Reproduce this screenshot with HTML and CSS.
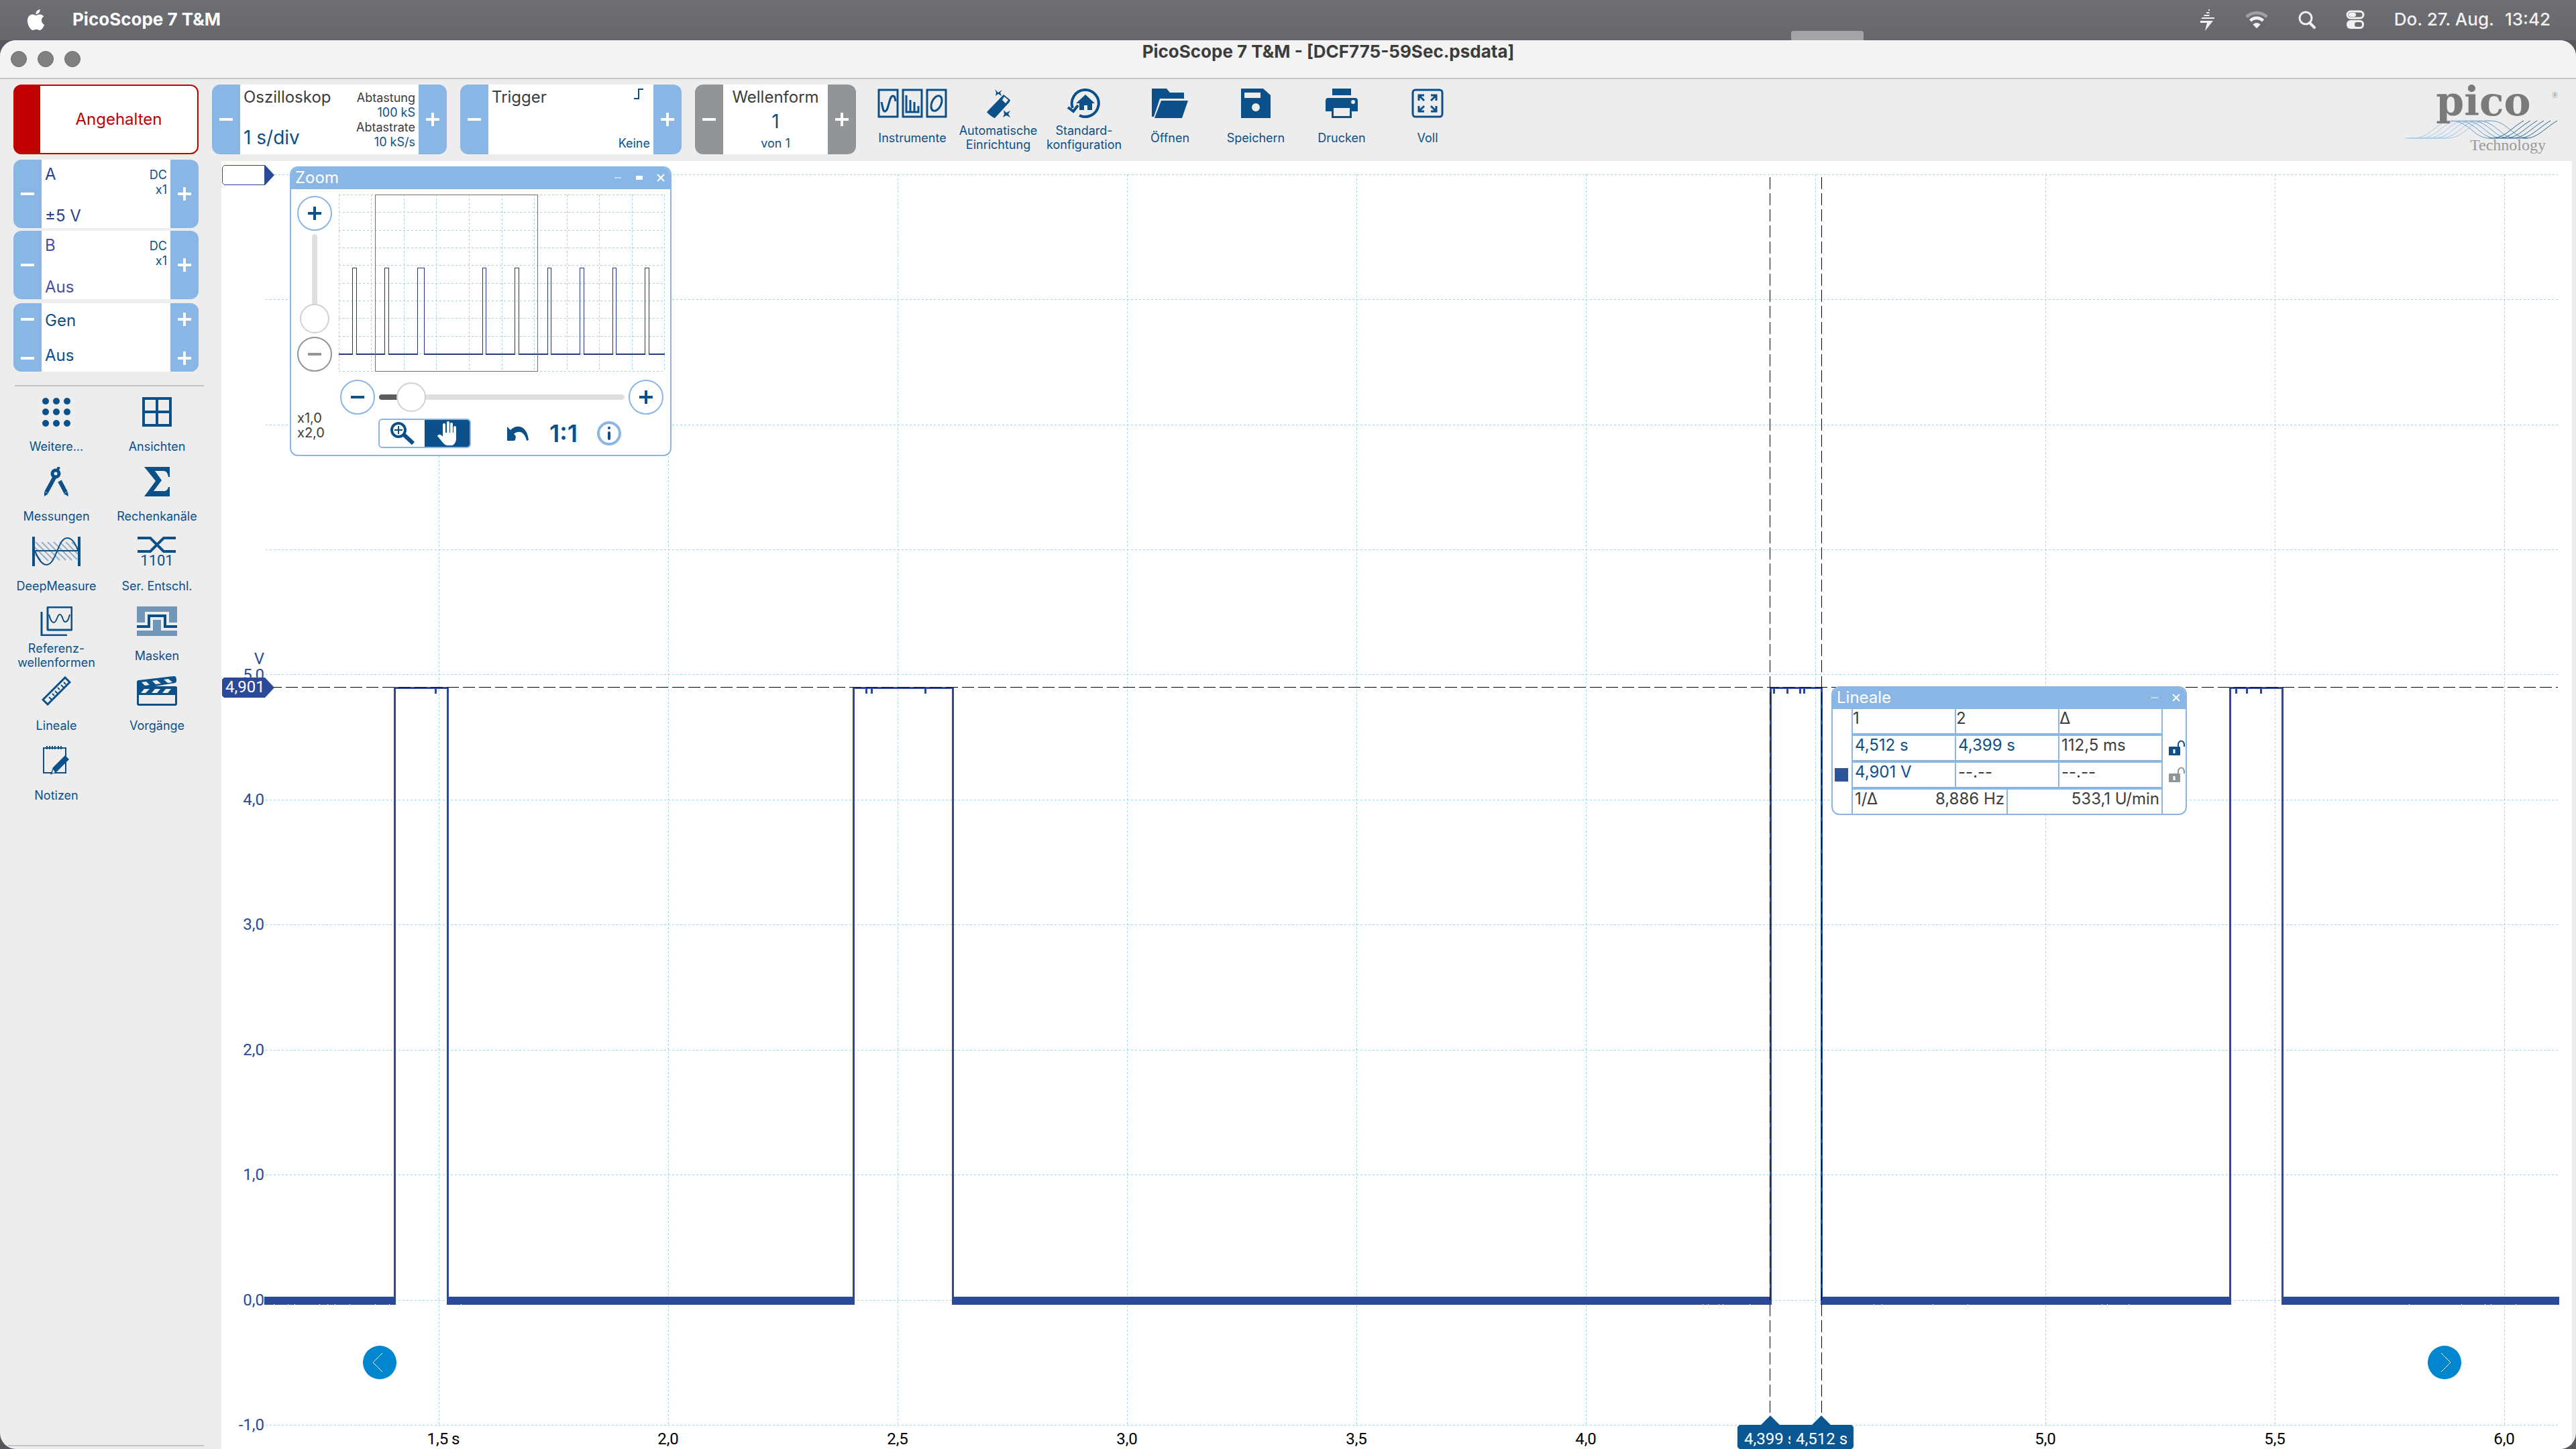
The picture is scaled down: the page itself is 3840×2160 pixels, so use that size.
FILE: index.html
```html
<!DOCTYPE html>
<html lang="de">
  <head>
    <title>PicoScope 7 T&amp;M</title>
    <meta charset="UTF-8">
    <meta name="viewport" content="width=device-width, initial-scale=1.0">
    <link rel="stylesheet" href="styles.css">
  </head>
  <body>
    <header class="menubar">
      <svg class="apple" viewBox="0 0 24 24"><path d="M12.152 6.896c-.948 0-2.415-1.078-3.96-1.04-2.04.027-3.91 1.183-4.961 3.014-2.117 3.675-.546 9.103 1.519 12.09 1.013 1.454 2.208 3.09 3.792 3.039 1.52-.065 2.09-.987 3.935-.987 1.831 0 2.35.987 3.96.948 1.637-.026 2.676-1.48 3.676-2.948 1.156-1.688 1.636-3.325 1.662-3.415-.039-.013-3.182-1.221-3.22-4.857-.026-3.04 2.48-4.494 2.597-4.559-1.429-2.09-3.623-2.324-4.39-2.376-2-.156-3.675 1.09-4.61 1.09zM15.53 3.83c.843-1.012 1.4-2.427 1.245-3.83-1.207.052-2.662.805-3.532 1.818-.78.896-1.454 2.338-1.273 3.714 1.338.104 2.715-.688 3.559-1.701"/></svg>
      <span class="app-name">PicoScope 7 T&amp;M</span>
      <span class="notch"></span>
      <div class="status">
        <svg width="24" height="34" viewBox="0 0 24 34" fill="#f1f1f1"><path d="M13 2h2v2h-2zM10 6h5l-1 2h-4zM7 10h8l-1 2H6zM4 14h18v2H2zM1 19h19L8 34 11 22H1z"/></svg>
        <svg width="34" height="30" viewBox="0 0 36 30" fill="none"><path d="M2 11a23 23 0 0 1 32 0" stroke="#a0a0a4" stroke-width="5"/><path d="M8 17a14 14 0 0 1 20 0" stroke="#f1f1f1" stroke-width="5"/><path d="M18 29l-6-6a8 8 0 0 1 12 0z" fill="#f1f1f1"/></svg>
        <svg width="28" height="28" viewBox="0 0 28 28" fill="none" stroke="#f1f1f1" stroke-width="3"><circle cx="12" cy="12" r="9"/><path d="M18 19l7 7" stroke-width="4" stroke-linecap="round"/></svg>
        <svg width="28" height="28" viewBox="0 0 28 28"><rect x="2" y="2" width="24" height="10" rx="5" fill="none" stroke="#f1f1f1" stroke-width="3"/><rect x="4" y="4" width="11" height="6" rx="3" fill="#f1f1f1"/><rect x="1" y="15" width="26" height="13" rx="6" fill="#f1f1f1"/><rect x="13" y="18" width="11" height="7" rx="3" fill="#6b6c71"/></svg>
        <time>Do. 27. Aug.<span class="clock">13:42</span></time>
      </div>
    </header>

    <div class="window">
      <div class="titlebar">
        <div class="lights"><i></i><i></i><i></i></div>
        <h1>PicoScope 7 T&amp;M - [DCF775-59Sec.psdata]</h1>
      </div>

      <div class="content">
        <aside class="sidebar">
          <div class="channels">
            <button class="stopped">Angehalten</button>
            <div class="box channel">
              <button class="side minus" aria-label="A kleiner"></button>
              <div class="face navy">
                <div class="col"><span>A</span><span>±5 V</span></div>
                <div class="small blue">DC<br>x1</div>
              </div>
              <button class="side plus" aria-label="A größer"></button>
            </div>
            <div class="box channel">
              <button class="side minus" aria-label="B kleiner"></button>
              <div class="face purple">
                <div class="col"><span>B</span><span>Aus</span></div>
                <div class="small blue">DC<br>x1</div>
              </div>
              <button class="side plus" aria-label="B größer"></button>
            </div>
            <div class="box channel gen">
              <div class="stack"><button class="side minus" aria-label="Gen kleiner"></button><button class="side minus" aria-label="Aus kleiner"></button></div>
              <div class="face blue">
                <div class="col"><span>Gen</span><span>Aus</span></div>
              </div>
              <div class="stack"><button class="side plus" aria-label="Gen größer"></button><button class="side plus" aria-label="Aus größer"></button></div>
            </div>
          </div>
          <hr>
          <nav class="apps">
            <button class="tool">
              <svg width="44" height="44" viewBox="0 0 44 44" fill="#0b5089"><circle cx="6" cy="6" r="5"/><circle cx="22" cy="6" r="5"/><circle cx="38" cy="6" r="5"/><circle cx="6" cy="22" r="5"/><circle cx="22" cy="22" r="5"/><circle cx="38" cy="22" r="5"/><circle cx="6" cy="39" r="5"/><circle cx="22" cy="39" r="5"/><circle cx="38" cy="39" r="5"/></svg>
              <span>Weitere...</span>
            </button>
            <button class="tool">
              <svg width="44" height="44" viewBox="0 0 44 44" fill="none" stroke="#0b5089" stroke-width="4"><path d="M2 2h40v40H2zM22 2v40M2 22h40"/></svg>
              <span>Ansichten</span>
            </button>
            <button class="tool">
              <svg width="44" height="44" viewBox="0 0 44 44" fill="none" stroke="#0b5089"><circle cx="21" cy="10" r="5" stroke-width="5"/><path d="M24 4l2-4" stroke-width="4"/><path d="M19 16L7 38" stroke-width="6"/><path d="M27 21l9 17" stroke-width="6"/><path d="M4 37l6 3-6 4zM39 37l-6 3 7 4z" fill="#0b5089" stroke="none"/></svg>
              <span>Messungen</span>
            </button>
            <button class="tool">
              <svg width="44" height="44" viewBox="0 0 44 44"><path fill="#0b5089" d="M3 0h38v15h-2c-1-6-3-9-8-9H19l10 14-12 16h15c4 0 6-2 7-6h2v14H3l17-23z"/></svg>
              <span>Rechenkanäle</span>
            </button>
            <button class="tool">
              <svg width="72" height="44" viewBox="0 0 72 44" fill="none" stroke="#0b5089"><path d="M4 16l20 20M5 8l27 27M14 8l27 27M23 8l27 27M32 8l27 27M41 8l26 26M50 8l18 18M59 8l9 9M4 26l9 9" stroke="#94b0c9" stroke-width="2"/><path d="M4 21h64" stroke-width="2"/><path d="M4 21c5 12 10 21 17 21 15 0 17-40 31-40 8 0 12 8 16 18" stroke-width="2"/><path d="M2 0v44M70 0v44" stroke-width="4"/></svg>
              <span>DeepMeasure</span>
            </button>
            <button class="tool">
              <svg width="60" height="44" viewBox="0 0 60 44"><path d="M1 2h19l20 20h18M1 22h19L40 2h18" fill="none" stroke="#0b5089" stroke-width="4"/><text x="30" y="43" text-anchor="middle" class="bits">1101</text></svg>
              <span>Ser. Entschl.</span>
            </button>
            <button class="tool">
              <svg width="48" height="44" viewBox="0 0 48 44" fill="none" stroke="#0b5089"><rect x="11" y="1" width="36" height="34" rx="1" stroke-width="3"/><path d="M2 8v35h38" stroke-width="3"/><path d="M13 12c2 8 4 12 7 12 5 0 5-12 9-12 5 0 4 11 8 11 4 0 5-4 7-11" stroke-width="2"/></svg>
              <span>Referenz-<br>wellenformen</span>
            </button>
            <button class="tool">
              <svg width="60" height="44" viewBox="0 0 60 44"><path d="M0 0h60v24H48V8H12v16H0zM0 36h24V20h12v16h24v8H0z" fill="#7196b7"/><path d="M0 30h18V14h24v16h18" fill="none" stroke="#0b5089" stroke-width="4"/></svg>
              <span>Masken</span>
            </button>
            <button class="tool">
              <svg width="44" height="44" viewBox="0 0 44 44" fill="none" stroke="#0b5089"><path d="M2 35L35 2l7 7L9 42z" stroke-width="3"/><path d="M9 29l4 4M14 24l3 3M18 20l4 4M22 15l3 3M27 11l4 4M31 7l3 3" stroke-width="2" transform="translate(2 2)"/></svg>
              <span>Lineale</span>
            </button>
            <button class="tool">
              <svg width="60" height="44" viewBox="0 0 60 44"><path fill="#0b5089" d="M3 6L55 0c3 0 4 2 4 5s0 4-2 5l-30 5h31c1 0 2 1 2 2v24c0 2-1 3-3 3H3c-2 0-3-1-3-3V9c0-2 1-3 3-3z"/><path fill="#ededed" d="M3 28h54v13H3zM7 9l7-1 5 5-7 1zM23 7l7-1 6 5-8 1zM40 5l7-1 6 5-7 1zM11 19h8l-6 6H6zM27 19h8l-5 6h-8zM43 19h8l-5 6h-8z"/></svg>
              <span>Vorgänge</span>
            </button>
            <button class="tool">
              <svg width="44" height="44" viewBox="0 0 44 44" fill="none" stroke="#0b5089"><path d="M3 3h33v37H3z" stroke-width="2"/><path d="M8 0v5M12 0v5M16 0v5M20 0v5M25 0v5M29 0v5" stroke-width="2"/><path d="M35 14l6 6-19 19-9 4 4-11z" fill="#0b5089" stroke="none"/><path d="M17 35l3 4-4 2z" fill="#fff" stroke="none"/></svg>
              <span>Notizen</span>
            </button>
          </nav>
          <hr class="last">
        </aside>

        <main>
          <div class="toolbar">
            <div class="box scope">
              <button class="side minus" aria-label="Zeitbasis kleiner"></button>
              <div class="face">
                <div class="col"><span>Oszilloskop</span><span class="big blue">1 s/div</span></div>
                <div class="small">Abtastung<br><b>100 kS</b><br>Abtastrate<br><b>10 kS/s</b></div>
              </div>
              <button class="side plus" aria-label="Zeitbasis größer"></button>
            </div>
            <div class="box trigger">
              <button class="side minus" aria-label="Trigger kleiner"></button>
              <div class="face">
                <div class="col"><span>Trigger</span></div>
                <div class="small col blue">
                  <svg width="24" height="18" viewBox="0 0 24 18"><path d="M0 16h7V2h7" fill="none" stroke="#0b5089" stroke-width="2"/></svg>
                  <span>Keine</span>
                </div>
              </div>
              <button class="side plus" aria-label="Trigger größer"></button>
            </div>
            <div class="box grey wave">
              <button class="side minus" aria-label="Vorherige Wellenform"></button>
              <div class="face">
                <div>Wellenform</div>
                <div class="big blue">1</div>
                <div class="small blue">von 1</div>
              </div>
              <button class="side plus" aria-label="Nächste Wellenform"></button>
            </div>
            <nav class="tools">
              <button class="tool">
                <svg width="104" height="44" viewBox="0 0 104 44" fill="none" stroke="#0b5089" stroke-width="3"><path d="M2 2h28v40H2zM38 2h28v40H38zM74 2h28v40H74z"/><path d="M6 20c2 8 2 14 5 14 6 0 6-23 12-23 3 0 3 3 4 8M43 10v25h18v-9M49 35V17M55 35V20"/><ellipse cx="88" cy="22" rx="7" ry="12" transform="rotate(24 88 22)"/></svg>
                <span>Instrumente</span>
              </button>
              <button class="tool">
                <svg width="40" height="44" viewBox="0 0 40 44"><path fill="#0b5089" d="M28 9l10 8-1 3-22 24c-2 0-11-7-12-9z"/><path fill="#ededed" d="M29 12l6 5-4 5-5-5z"/><path d="M15 1l5 5 6-4-3 4 2 5-5-3-4 3 1-5zM28 32l4 4 6-3-3 5 3 5-6-3-5 3 2-5z" fill="#0b5089"/></svg>
                <span>Automatische<br>Einrichtung</span>
              </button>
              <button class="tool">
                <svg width="52" height="44" viewBox="0 0 52 44"><path d="M9 29A20 20 0 1 1 19 40" fill="none" stroke="#0b5089" stroke-width="4"/><path d="M2 28l8 6 7-9" fill="none" stroke="#0b5089" stroke-width="4"/><path fill="#0b5089" d="M28 9l14 13h-4v10h-7v-7h-5v7h-7V22h-5z"/></svg>
                <span>Standard-<br>konfiguration</span>
              </button>
              <button class="tool">
                <svg width="54" height="44" viewBox="0 0 54 44" fill="#0b5089"><path d="M0 0h22l5 6h21v9H12L3 42H0z"/><path d="M14 18h40l-9 26H4z"/></svg>
                <span>Öffnen</span>
              </button>
              <button class="tool">
                <svg width="44" height="44" viewBox="0 0 44 44"><path fill="#0b5089" d="M0 0h33l11 10v34H0z"/><path fill="#ededed" d="M5 6h24v8H5z"/><circle cx="22" cy="28" r="6" fill="#ededed"/></svg>
                <span>Speichern</span>
              </button>
              <button class="tool">
                <svg width="48" height="44" viewBox="0 0 48 44"><path fill="#0b5089" d="M10 0h28v10H10zM4 14h40c3 0 4 2 4 4v16h-9v10H9V34H0V18c0-2 1-4 4-4z"/><path fill="#ededed" d="M12 29h24v12H12z"/><circle cx="41" cy="20" r="3" fill="#ededed"/></svg>
                <span>Drucken</span>
              </button>
              <button class="tool">
                <svg width="48" height="44" viewBox="0 0 48 44" fill="none" stroke="#0b5089" stroke-width="3"><rect x="2" y="2" width="44" height="40" rx="4"/><path d="M19 18l-8-8m0 8v-8h8M29 18l8-8m0 8v-8h-8M19 26l-8 8m0-8v8h8M29 26l8 8m0-8v8h-8"/></svg>
                <span>Voll</span>
              </button>
            </nav>
            <svg class="logo" width="232" height="104" viewBox="0 0 232 104">
              <g fill="none" stroke-width="1">
                <g stroke="#9cc8f0"><path d="M0 80h13c26 0 34-26 56-26"/><path d="M4 80h19c26 0 34-26 56-26"/><path d="M14 80h19c26 0 34-26 56-26"/><path d="M24 80h19c26 0 34-26 56-26"/><path d="M34 80h19c26 0 34-26 56-26"/><path d="M44 80h19c26 0 34-26 56-26"/></g>
                <g stroke="#6299c9"><path d="M69 54c26 0 34 26 56 26"/><path d="M79 54c26 0 34 26 56 26"/><path d="M89 54c26 0 34 26 56 26"/><path d="M99 54c26 0 34 26 56 26"/><path d="M109 54c26 0 34 26 56 26"/><path d="M119 54h8c26 0 34 26 56 26"/></g>
                <g stroke="#23648c"><path d="M125 80h5c18 0 28-15 47-26"/><path d="M135 80h5c18 0 28-15 47-26"/><path d="M145 80h5c18 0 28-15 47-26"/><path d="M155 80h5c18 0 28-15 47-26"/><path d="M165 80h5c18 0 28-15 47-26"/><path d="M175 80h5c18 0 28-15 47-26"/></g>
              </g>
              <text x="117" y="46" text-anchor="middle" class="logo-name">pico</text>
              <text x="228" y="20" text-anchor="end" class="logo-r">®</text>
              <text x="210" y="98" text-anchor="end" class="logo-sub">Technology</text>
            </svg>
          </div>

          <section class="chart">
            <svg class="plot" viewBox="330 240 3504 1920">
              <!-- grid -->
              <path class="grid" d="M409 260.5H3813M396 446.5H3813M396 633.5H3813M396 819.5H3813M396 1005.5H3813M396 1192.5H3813M396 1378.5H3813M396 1565.5H3813M396 1751.5H3813M396 1938.5H3813M396 2124.5H3813"/>
              <path class="grid" d="M654.5 260V2124M996.5 260V2124M1338.5 260V2124M1680.5 260V2124M2022.5 260V2124M2364.5 260V2124M2706.5 260V2124M3049.5 260V2124M3391.5 260V2124M3733.5 260V2124"/>

              <!-- signal -->
              <path class="band" d="M394 1939H589M667 1939H1273M1420 1939H2640M2715 1939H3325M3402 1939H3815"/>
              <path class="signal" d="M588.5 1945V1025.5H667.5V1945M1272.5 1945V1025.5H1420.5V1945M2639.5 1945V1025.5H2715.5V1945M3324.5 1945V1025.5H3402.5V1945"/>
              <path class="signal" d="M649.5 1027v7M1291.5 1027v7M1299.5 1027v7M1379.5 1027v7M2644.5 1027v7M2664.5 1027v7M2683.5 1027v7M2689.5 1027v7M3333.5 1027v7M3349.5 1027v7M3370.5 1027v7"/>
              <path class="gaps" d="M408.5 1944v1M429.5 1944v1M439.5 1944v1M476.5 1944v1M488.5 1944v1M499.5 1944v1M521.5 1944v1M559.5 1944v1M580.5 1944v1M687.5 1944v1M2538.5 1944v1M2546.5 1944v1M2562.5 1944v1M2568.5 1944v1M2608.5 1944v1M2793.5 1944v1M2805.5 1944v1M2881.5 1944v1M2933.5 1944v1M3133.5 1944v1M3141.5 1944v1M3173.5 1944v1M3591.5 1944v1M3669.5 1944v1M3704.5 1944v1M3713.5 1944v1M3750.5 1944v1"/>

              <!-- rulers -->
              <path class="ruler" d="M402 1024.5H3813"/>
              <path class="ruler" d="M2638.5 264V2110M2715.5 264V2110"/>

              <g class="volts">
                <text x="394" y="990">V</text>
                <text x="394" y="1014">5,0</text>
                <text x="394" y="1200">4,0</text>
                <text x="394" y="1386">3,0</text>
                <text x="394" y="1573">2,0</text>
                <text x="394" y="1759">1,0</text>
                <text x="394" y="1946">0,0</text>
                <text x="394" y="2132">-1,0</text>
              </g>
              <g class="seconds">
                <text x="661" y="2153">1,5&#8201;s</text>
                <text x="996" y="2153">2,0</text>
                <text x="1338" y="2153">2,5</text>
                <text x="1680" y="2153">3,0</text>
                <text x="2022" y="2153">3,5</text>
                <text x="2364" y="2153">4,0</text>
                <text x="3049" y="2153">5,0</text>
                <text x="3391" y="2153">5,5</text>
                <text x="3733" y="2153">6,0</text>
              </g>

              <path d="M334.5 246.5H394.5V275.5H334.5L331.5 272.5V249.5z" fill="#fff" stroke="#2a4a99"/>
              <path d="M394 246h1l14 15-14 15h-1z" fill="#2a4a99"/>
              <path d="M334 1010h61l14 15-14 15h-61l-3-3v-24z" fill="#2a4a99"/>
              <text x="336" y="1032" class="tag">4,901</text>
              <path d="M2593 2124h32l14-14 14 14h30l3 3v30l-3 3h-90l-3-3v-30z" fill="#0a5791"/>
              <text x="2600" y="2153" class="tag">4,399 s</text>
              <path d="M2669 2124h32l14-14 14 14h31l3 3v30l-3 3h-91z" fill="#0a5791"/>
              <text x="2677" y="2153" class="tag">4,512 s</text>
            </svg>

            <button class="scroll left" aria-label="Zurück"><svg width="50" height="50" viewBox="0 0 50 50"><path d="M29 11L15 25l14 14"/></svg></button>
            <button class="scroll right" aria-label="Weiter"><svg width="50" height="50" viewBox="0 0 50 50"><path d="M20 11l14 14-14 14"/></svg></button>

            <div class="panel zoom">
              <div class="panel-head">
                <span>Zoom</span>
                <button aria-label="Minimieren"><svg width="12" height="12" viewBox="0 0 12 12"><path d="M1 6h10"/></svg></button>
                <button aria-label="Maximieren"><svg width="12" height="12" viewBox="0 0 12 12"><path d="M1 6h10" stroke-width="6"/></svg></button>
                <button aria-label="Schließen"><svg width="12" height="12" viewBox="0 0 12 12"><path d="M1 1l10 10M11 1L1 11" stroke-width="2"/></svg></button>
              </div>
              <div class="zoom-body">
                <div class="zoom-v">
                  <button class="round plus" aria-label="Vertikal vergrößern"></button>
                  <input type="range" class="v-range" min="0" max="100" value="0" aria-label="Vertikaler Zoom">
                  <button class="round minus off" aria-label="Vertikal verkleinern"></button>
                </div>
                <svg class="mini" viewBox="505 290 486 264">
                  <path class="mini-grid" d="M505 290.5H991M505 316.5H991M505 343.5H991M505 369.5H991M505 395.5H991M505 422.5H991M505 448.5H991M505 474.5H991M505 501.5H991M505 527.5H991M505 553.5H991"/>
                  <path class="mini-grid" d="M505.5 290V554M553.5 290V554M602.5 290V554M650.5 290V554M699.5 290V554M748.5 290V554M796.5 290V554M845.5 290V554M893.5 290V554M942.5 290V554M990.5 290V554"/>
                  <path class="mini-signal" d="M525.5 528V399.5H531.5V528M573.5 528V399.5H579.5V528M622.5 528V399.5H632.5V528M719.5 528V399.5H724.5V528M767.5 528V399.5H773.5V528M816.5 528V399.5H821.5V528M864.5 528V399.5H870.5V528M913.5 528V399.5H918.5V528M961.5 528V399.5H967.5V528"/>
                  <path class="mini-signal base" d="M505 528H526M531 528H574M579 528H623M632 528H720M724 528H768M773 528H817M821 528H865M870 528H914M918 528H962M967 528H991"/>
                  <rect x="559.5" y="290.5" width="242" height="263" fill="none" stroke="#707070"/>
                </svg>
                <div class="scale">x1,0<br>x2,0</div>
                <div class="zoom-h">
                  <div class="h-row">
                    <button class="round minus" aria-label="Horizontal verkleinern"></button>
                    <input type="range" class="h-range" min="0" max="100" value="8" aria-label="Horizontaler Zoom">
                    <button class="round plus" aria-label="Horizontal vergrößern"></button>
                  </div>
                  <div class="zoom-tools">
                    <div class="modes">
                      <button aria-label="Lupe"><svg width="40" height="36" viewBox="0 0 40 36" fill="none" stroke="#0b5089"><circle cx="14" cy="13" r="10" stroke-width="4"/><path d="M8 13h12M14 7v12" stroke-width="2"/><path d="M22 20l14 13" stroke-width="6"/></svg></button>
                      <button class="on" aria-label="Hand"><svg width="34" height="38" viewBox="0 0 34 38"><path d="M12 20V6M18 18V3M23 18V5M28 20V10" stroke="#fff" stroke-width="4" stroke-linecap="round"/><path fill="#fff" d="M10 18h20v9c0 5-3 9-6 10h-8c-5-1-9-9-14-14 2-4 6-2 8 1z"/></svg></button>
                    </div>
                    <button class="plain" aria-label="Rückgängig"><svg width="34" height="24" viewBox="0 0 34 24"><path fill="#0b5089" d="M1 2l5 5C16-3 31 1 33 22l-3 1C27 9 18 7 11 13l3 3-1 6-2 1H1z"/></svg></button>
                    <button class="plain ratio">1:1</button>
                    <button class="plain" aria-label="Info"><svg width="36" height="40" viewBox="0 0 36 40"><circle cx="18" cy="20" r="16" fill="none" stroke="#8ab6e6" stroke-width="4"/><circle cx="18" cy="12" r="2" fill="#0b5089"/><path d="M18 19v9" stroke="#0b5089" stroke-width="4" stroke-linecap="round"/></svg></button>
                  </div>
                </div>
              </div>
            </div>

            <div class="panel rulers">
              <div class="panel-head">
                <span>Lineale</span>
                <button aria-label="Minimieren"><svg width="12" height="12" viewBox="0 0 12 12"><path d="M1 6h10"/></svg></button>
                <button aria-label="Schließen"><svg width="12" height="12" viewBox="0 0 12 12"><path d="M1 1l10 10M11 1L1 11" stroke-width="2"/></svg></button>
              </div>
              <table>
                <colgroup><col class="mark"><col span="6"><col class="lock"></colgroup>
                <tr class="heads">
                  <td class="edge"></td><th colspan="2">1</th><th colspan="2">2</th><th colspan="2">Δ</th><td class="edge end"></td>
                </tr>
                <tr>
                  <td class="edge"></td><td colspan="2" class="blue">4,512 s</td><td colspan="2" class="blue">4,399 s</td><td colspan="2">112,5 ms</td>
                  <td class="edge end"><svg width="26" height="24" viewBox="0 0 26 24"><path d="M15 11V7a4 5 0 0 1 9 0v3" fill="none" stroke="#0b5089" stroke-width="2"/><rect x="1" y="10" width="17" height="13" rx="1" fill="#0b5089"/><path d="M9 14v6" stroke="#fff" stroke-width="3"/></svg></td>
                </tr>
                <tr>
                  <td class="edge"><i class="swatch"></i></td><td colspan="2" class="blue">4,901 V</td><td colspan="2">--.--</td><td colspan="2">--.--</td>
                  <td class="edge end"><svg width="26" height="24" viewBox="0 0 26 24"><path d="M15 11V7a4 5 0 0 1 9 0v3" fill="none" stroke="#929597" stroke-width="2"/><rect x="1" y="10" width="17" height="13" rx="1" fill="#929597"/><path d="M9 14v6" stroke="#fff" stroke-width="3"/></svg></td>
                </tr>
                <tr class="freq">
                  <td class="edge"></td><td colspan="3"><div class="pair"><span>1/Δ</span><span>8,886 Hz</span></div></td><td colspan="3" class="num">533,1 U/min</td><td class="edge end"></td>
                </tr>
              </table>
            </div>
          </section>
        </main>
      </div>
    </div>
  </body>
</html>
```

FILE: styles.css
```css
*{
   box-sizing: border-box;
   margin: 0;
   padding: 0;
}

body{
   display: flex;
   flex-direction: column;
   min-height: 100vh;
   background: #57585d;
   font-family: Inter, "Liberation Sans", sans-serif;
   font-size: 24px;
   line-height: 28px;
   color: #3c3c3c;
}

button{
   border: 0;
   background: none;
   font: inherit;
   color: inherit;
}

svg{
   display: block;
}

.blue, .small b{
   color: #0b5089;
}

.navy{
   color: #2b3f91;
}

.purple{
   color: #4b4f9e;
}

/* menu bar */
.menubar{
   position: relative;
   display: flex;
   align-items: center;
   height: 60px;
   padding: 0 38px 2px 38px;
   background: linear-gradient(#6e6f74, #66676c);
   color: #fff;
   font-size: 26px;
}

.apple{
   width: 31px;
   height: 31px;
   fill: #fff;
}

.app-name{
   margin-left: 39px;
   font-weight: 700;
}

.notch{
   position: absolute;
   left: 2670px;
   bottom: 0;
   width: 108px;
   height: 14px;
   border-radius: 4px 4px 0 0;
   background: #a3a4a7;
}

.status{
   display: flex;
   align-items: center;
   gap: 44px;
   margin-left: auto;
   color: #f1f1f1;
   font-weight: 500;
}

.clock{
   margin-left: 16px;
}

/* window */
.window{
   flex: 1;
   display: flex;
   flex-direction: column;
   overflow: hidden;
   border-radius: 24px;
   background: #ededed;
}

.titlebar{
   display: flex;
   height: 58px;
   border-bottom: 2px solid #c4c4c4;
   background: #f3f3f3;
}

.lights{
   display: flex;
   align-items: center;
   gap: 16px;
   padding-left: 16px;
}

.lights i{
   width: 24px;
   height: 24px;
   border: 1px solid #6b6b6b;
   border-radius: 50%;
   background: #7f7f7f;
}

h1{
   flex: 1;
   font-size: 26px;
   line-height: 34px;
   text-align: center;
}

.content{
   flex: 1;
   display: flex;
}

/* left column */
.sidebar{
   display: flex;
   flex-direction: column;
   flex: none;
   width: 316px;
}

.channels{
   display: flex;
   flex-direction: column;
   padding: 8px 20px 20px;
}

.stopped{
   height: 104px;
   margin-bottom: 8px;
   border: 2px solid #c00000;
   border-left-width: 40px;
   border-radius: 12px;
   background: #fff;
   color: #c00000;
}

.box{
   display: flex;
   height: 104px;
   overflow: hidden;
   border-radius: 12px;
   background: #fff;
}

.channel{
   height: 102px;
   margin-bottom: 4px;
}

.gen{
   margin: 2px 0 0;
}

.side{
   flex: none;
   width: 42px;
   background-color: #8ab6e6;
   color: #fff;
}

.grey .side{
   background-color: #929597;
}

/* the signs are painted in the text colour */
.minus{
   background-image: linear-gradient(currentColor, currentColor);
   background-position: center;
   background-repeat: no-repeat;
   background-size: 20px 4px;
}

.plus{
   background-image: linear-gradient(currentColor, currentColor), linear-gradient(currentColor, currentColor);
   background-position: center;
   background-repeat: no-repeat;
   background-size: 20px 4px, 4px 20px;
}

.stack{
   display: flex;
   flex-direction: column;
   justify-content: space-between;
   background: #8ab6e6;
}

.stack .side{
   height: 48px;
}

.stack .side:last-child{
   height: 40px;
}

.face{
   flex: 1;
   display: flex;
   justify-content: space-between;
   padding: 8px 5px 4px;
}

.gen .face{
   padding: 12px 5px 10px;
}

.col{
   display: flex;
   flex-direction: column;
   justify-content: space-between;
}

.small{
   font-size: 18px;
   line-height: 22px;
   text-align: right;
}

.small b{
   font-weight: 400;
}

.channel .small{
   padding-top: 4px;
}

.big{
   font-size: 28px;
}

hr{
   height: 2px;
   margin: 0 12px 0 22px;
   border: 0;
   background: #c4c4c4;
}

.last{
   margin: auto 12px 4px;
}

.apps{
   display: grid;
   grid-template-columns: 150px 150px;
   grid-auto-rows: 104px;
   padding: 16px 7px 0 9px;
}

.tool{
   display: flex;
   flex-direction: column;
   align-items: center;
   gap: 8px;
   color: #0b5089;
   font-size: 18px;
   line-height: 21px;
}

.tool span{
   display: flex;
   align-items: center;
   height: 42px;
   text-align: center;
}

.bits{
   fill: #0b5089;
   font: 22px Roboto, sans-serif;
}

/* toolbar */
main{
   flex: 1;
   display: flex;
   flex-direction: column;
   min-width: 0;
   padding-right: 6px;
}

.toolbar{
   display: flex;
   gap: 20px;
   height: 122px;
   padding: 8px 17px 10px 0;
}

.scope{
   width: 350px;
}

.toolbar .face{
   padding: 5px;
}

.scope .col{
   padding-bottom: 6px;
}

.scope .small{
   padding-top: 4px;
}

.trigger{
   width: 330px;
}

.trigger .small{
   align-items: flex-end;
}

.wave{
   width: 240px;
}

.wave .face{
   flex-direction: column;
   text-align: center;
}

.wave .small{
   text-align: center;
}

.tools{
   display: flex;
   padding-top: 6px;
}

.tools .tool{
   width: 128px;
}

.logo{
   margin-left: auto;
}

.logo-name{
   fill: #7c797a;
   font: bold 60px "DejaVu Serif", serif;
}

.logo-r{
   fill: #8c8a8b;
   font: 12px "Liberation Serif", serif;
}

.logo-sub{
   fill: #999;
   font: 24px "Liberation Serif", serif;
}

/* chart */
.chart{
   position: relative;
   flex: 1;
   margin-left: 14px;
   background: #fff;
}

.plot{
   width: 100%;
   height: 100%;
}

.plot text{
   font: 24px Roboto, sans-serif;
}

.grid, .mini-grid{
   fill: none;
   stroke: #a4d3e1;
   stroke-dasharray: 3 3;
   shape-rendering: crispEdges;
}

.signal{
   fill: none;
   stroke: #2a4a99;
   stroke-width: 3;
   shape-rendering: crispEdges;
}

.band{
   stroke: #2a4a99;
   stroke-width: 12;
}

.gaps{
   stroke: #fff;
}

.ruler{
   stroke: #000;
   stroke-dasharray: 18 6;
   shape-rendering: crispEdges;
}

.volts{
   fill: #2a4a99;
   text-anchor: end;
}

.seconds{
   text-anchor: middle;
}

.tag{
   fill: #fff;
}

.scroll{
   position: absolute;
   bottom: 104px;
   width: 50px;
   height: 50px;
   border-radius: 50%;
   background: #0085cf;
}

.scroll path{
   fill: none;
   stroke: #fff;
}

.left{
   left: 211px;
}

.right{
   right: 165px;
}

/* floating panels */
.panel{
   position: absolute;
   overflow: hidden;
   border: 2px solid #8ab6e6;
   border-radius: 12px;
   background: #fff;
}

.panel-head{
   display: flex;
   align-items: center;
   gap: 20px;
   height: 32px;
   padding: 0 8px 2px 6px;
   background: #8ab6e6;
   color: #fff;
}

.panel-head span{
   flex: 1;
}

.panel-head path{
   fill: none;
   stroke: #fff;
}

.zoom{
   left: 102px;
   top: 8px;
   width: 569px;
}

.zoom-body{
   display: grid;
   grid-template-columns: 52px 1fr;
   gap: 12px 10px;
   padding: 8px 8px 10px 9px;
}

.zoom-v{
   display: flex;
   flex-direction: column;
   align-items: center;
   gap: 5px;
   padding-top: 2px;
}

.mini{
   width: 100%;
   height: 264px;
}

.mini-signal{
   fill: none;
   stroke: #1f3a8c;
   shape-rendering: crispEdges;
}

.base{
   stroke-width: 2;
}

.round{
   flex: none;
   width: 52px;
   height: 52px;
   border: 2px solid #8ab6e6;
   border-radius: 50%;
   background-color: #fff;
   color: #0b5089;
}

.off{
   border-color: #929597;
   color: #929597;
}

input[type=range]{
   appearance: none;
   background: none;
}

input[type=range]::-webkit-slider-runnable-track{
   border-radius: 4px;
   background: #e0e0e0;
}

input[type=range]::-webkit-slider-thumb{
   appearance: none;
   width: 44px;
   height: 44px;
   border: 2px solid #d0d0d0;
   border-radius: 50%;
   background: #fff;
}

.v-range{
   width: 44px;
   height: 148px;
   writing-mode: vertical-lr;
   direction: rtl;
}

.v-range::-webkit-slider-runnable-track{
   width: 8px;
}

.v-range::-webkit-slider-thumb{
   margin-left: -18px;
}

.h-range{
   flex: 1;
   min-width: 0;
   height: 44px;
}

.h-range::-webkit-slider-runnable-track{
   height: 8px;
   background: linear-gradient(90deg, #5c5c5c 12%, #e0e0e0 12%) !important;
}

.h-range::-webkit-slider-thumb{
   margin-top: -18px;
}

.scale{
   align-self: end;
   padding-bottom: 12px;
   font-size: 20px;
   line-height: 22px;
}

.h-row{
   display: flex;
   align-items: center;
   gap: 6px;
   padding: 0 2px;
}

.zoom-tools{
   display: flex;
   align-items: center;
   padding: 6px 0 0 59px;
}

.modes{
   display: flex;
   width: 138px;
   height: 44px;
   margin-right: 36px;
   overflow: hidden;
   border: 2px solid #8ab6e6;
   border-radius: 6px;
}

.modes button{
   flex: 1;
   display: flex;
   align-items: center;
   justify-content: center;
}

.modes .on{
   background: #0b5089;
}

.plain{
   display: flex;
   align-items: center;
   justify-content: center;
   width: 68px;
   height: 44px;
}

.ratio{
   color: #0b5089;
   font: 600 36px Inter, sans-serif;
}

/* ruler values */
.rulers{
   left: 2400px;
   top: 783px;
   width: 530px;
}

table{
   width: 100%;
   table-layout: fixed;
   border-spacing: 0;
}

.mark{
   width: 28px;
}

.lock{
   width: 36px;
}

th, td{
   height: 40px;
   padding: 0 3px;
   border-left: 2px solid #8ab6e6;
   border-bottom: 4px solid #8ab6e6;
   font-weight: 400;
   text-align: left;
   vertical-align: top;
}

.heads th{
   padding: 0;
}

.freq td{
   height: 36px;
   border-bottom: 0;
}

td.edge{
   padding: 8px 3px 0;
   border: 0;
}

td.end{
   border-left: 2px solid #8ab6e6;
   padding: 6px 0 0 8px;
}

.swatch{
   display: block;
   width: 20px;
   height: 20px;
   background: #2f539b;
}

.pair{
   display: flex;
   justify-content: space-between;
}

.num{
   text-align: right;
}
```
